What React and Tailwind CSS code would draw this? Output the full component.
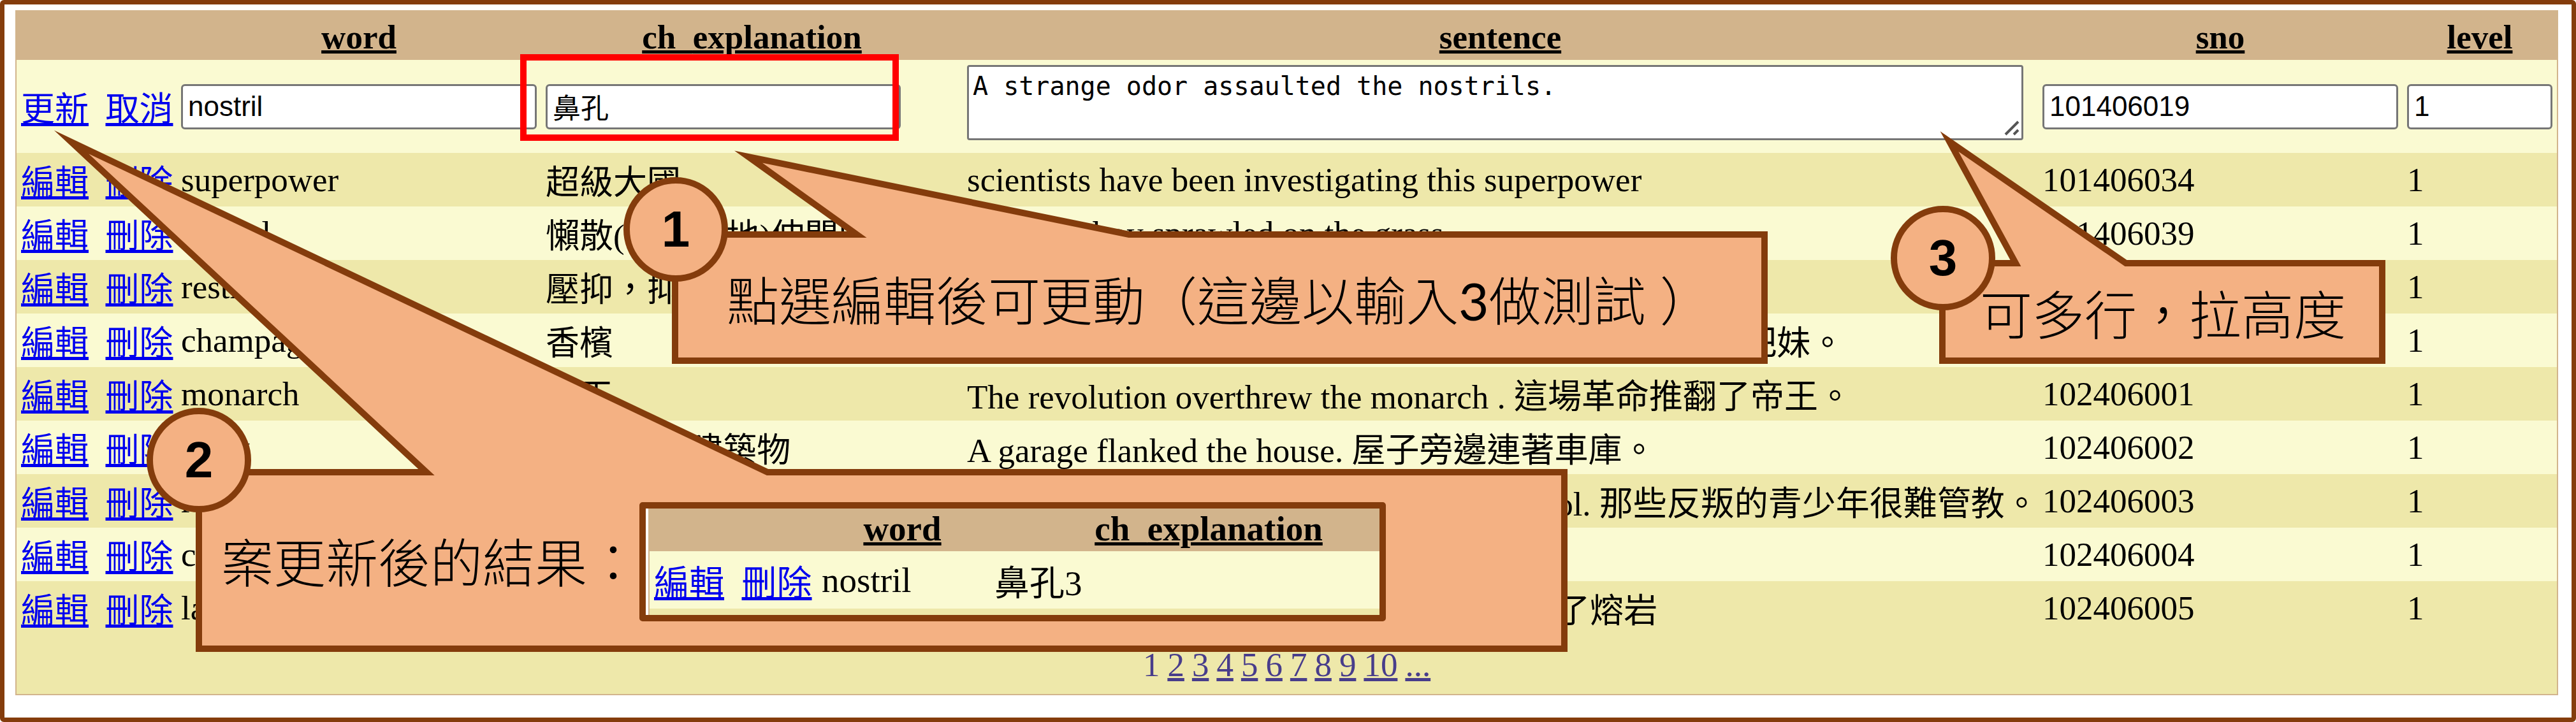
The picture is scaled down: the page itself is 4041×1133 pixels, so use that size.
const ROWS = [
  ["superpower", "超級大國", "scientists have been investigating this superpower", "101406034"],
  ["sprawl", "懶散(或笨拙地)伸開四肢", "The lazy boy sprawled on the grass.", "101406039"],
  ["restrain", "壓抑，抑制", "She could not restrain her anger.", "101406042"],
  ["champagne", "香檳", "He uses champagne to pick up girls . 他總是喜歡用香檳把妹。", "101406050"],
  ["monarch", "帝王", "The revolution overthrew the monarch . 這場革命推翻了帝王。", "102406001"],
  ["flank", "側面,側翼建築物", "A garage flanked the house. 屋子旁邊連著車庫。", "102406002"],
  ["rebellious", "反叛的", "These rebellious teenagers are hard to control. 那些反叛的青少年很難管教。", "102406003"],
  ["crater", "火山口", "The crater is very deep.", "102406004"],
  ["lava", "熔岩", "Lava streamed from the volcano. 火山噴出了熔岩", "102406005"],
];

const PAGES = ["2", "3", "4", "5", "6", "7", "8", "9", "10", "..."];

const LINE = "underline decoration-[5px] underline-offset-[3px]";
const FIELD =
  "block h-[71px] rounded-[6px] border-[3px] border-[#767676] bg-white px-[8px] font-['Liberation_Sans','Noto_Sans_CJK_TC',sans-serif] text-[44px] text-black";

function Commands({ first, second }) {
  return (
    <td className="pl-[7px] whitespace-nowrap">
      <a href="#" className={`text-[#0000ee] ${LINE}`}>{first}</a>
      {"\u00a0\u00a0"}
      <a href="#" className={`text-[#0000ee] ${LINE}`}>{second}</a>
    </td>
  );
}

function Heading({ children, className = "p-0" }) {
  return (
    <th scope="col" className={`text-center font-bold ${className}`}>
      <a href="#" className={`text-black ${LINE}`}>{children}</a>
    </th>
  );
}

function Explanation() {
  return (
    <>
      <span className="[text-decoration-skip-ink:none]">ch_</span>explanation
    </>
  );
}

function WordTable() {
  return (
    <table className="w-full table-fixed border-separate border-spacing-0 border-2 border-[#d2b48c] text-left">
      <colgroup>
        <col className="w-[251px]" />
        <col className="w-[572px]" />
        <col className="w-[661px]" />
        <col />
        <col className="w-[572px]" />
        <col className="w-[242px]" />
      </colgroup>
      <thead>
        <tr className="h-[76px] bg-[#d2b48c]">
          <td />
          <Heading className="px-0 pt-[4px] pb-0">word</Heading>
          <Heading className="px-0 pt-[4px] pb-0"><Explanation /></Heading>
          <Heading className="px-0 pt-[4px] pb-0">sentence</Heading>
          <Heading className="px-0 pt-[4px] pb-0">sno</Heading>
          <Heading className="px-0 pt-[4px] pb-0">level</Heading>
        </tr>
      </thead>
      <tbody>
        <tr className="h-[146px] bg-[#fafad2]">
          <Commands first="更新" second="取消" />
          <td className="px-[7px]">
            <input aria-label="word" defaultValue="nostril" className={`w-full ${FIELD}`} />
          </td>
          <td className="px-[7px]">
            <input aria-label="ch_explanation" defaultValue="鼻孔" className={`w-[557px] ${FIELD}`} />
          </td>
          <td className="px-[7px] pt-[8px] align-top">
            <div className="relative mr-4">
              <textarea
                aria-label="sentence"
                defaultValue="A strange odor assaulted the nostrils."
                className="block h-[118px] w-full resize-none rounded-[4px] border-[3px] border-[#767676] bg-white px-[6px] pt-[6px] font-['DejaVu_Sans_Mono',monospace] text-[40px] leading-[48px] text-black"
              />
              <svg viewBox="0 0 26 26" className="absolute right-[5px] bottom-[6px] size-[26px]" aria-hidden="true">
                <path d="M3 23L23 3M16 23L23 16" stroke="#555" strokeWidth="4" fill="none" />
              </svg>
            </div>
          </td>
          <td className="px-[7px]">
            <input aria-label="sno" defaultValue="101406019" className={`w-full ${FIELD}`} />
          </td>
          <td className="px-[7px]">
            <input aria-label="level" defaultValue="1" className={`w-full ${FIELD}`} />
          </td>
        </tr>
        {ROWS.map(([word, meaning, sentence, sno]) => (
          <tr key={word} className="h-[84px] whitespace-nowrap odd:bg-[#fafad2] even:bg-[#eee8aa]">
            <Commands first="編輯" second="刪除" />
            <td className="px-[7px] py-0">{word}</td>
            <td className="px-[7px] py-0">{meaning}</td>
            <td className="px-[7px] py-0">{sentence}</td>
            <td className="px-[7px] py-0">{sno}</td>
            <td className="px-[7px] py-0">1</td>
          </tr>
        ))}
      </tbody>
      <tfoot>
        <tr className="h-[93px] bg-[#eee8aa]">
          <td colSpan={6} className="p-0">
            <nav aria-label="Pages" className="flex justify-center gap-3 text-[#483d8b]">
              <span>1</span>
              {PAGES.map((p) => (
                <a key={p} href="#" className={LINE}>{p}</a>
              ))}
            </nav>
          </td>
        </tr>
      </tfoot>
    </table>
  );
}

function Outline({ width, height, points }) {
  return (
    <svg
      width={width}
      height={height}
      viewBox={`0 0 ${width} ${height}`}
      className="absolute top-0 left-0 overflow-visible"
      aria-hidden="true"
    >
      <polygon points={points} fill="#f4b183" stroke="#843c0c" strokeWidth="10" strokeMiterlimit="20" />
    </svg>
  );
}

const BADGE =
  "absolute flex size-[164px] items-center justify-center rounded-full border-[10px] border-[#843c0c] bg-[#f4b183] font-['Liberation_Sans',sans-serif] text-[80px] leading-none font-bold";
const NOTE = "font-['Lato','Noto_Sans_CJK_TC',sans-serif] text-[82px] leading-[100px] font-light whitespace-nowrap";

function ResultPreview() {
  return (
    <div className="overflow-hidden rounded-[5px] border-[10px] border-[#843c0c] bg-white pl-[4px]">
      <table className="w-full table-fixed border-separate border-spacing-0 border-l-2 border-[#d2b48c] text-left font-['Liberation_Serif','Noto_Sans_CJK_TC',serif] text-[55px] leading-[normal]">
        <colgroup>
          <col className="w-[263px]" />
          <col className="w-[267px]" />
          <col />
        </colgroup>
        <thead>
          <tr className="h-[67px] bg-[#d2b48c]">
            <td />
            <Heading className="px-0 pt-0 pb-[4px]">word</Heading>
            <Heading className="pt-0 pr-0 pb-[4px] pl-[79px]"><Explanation /></Heading>
          </tr>
        </thead>
        <tbody>
          <tr className="h-[90px] bg-[#fafad2]">
            <Commands first="編輯" second="刪除" />
            <td className="px-[7px] py-0">nostril</td>
            <td className="px-[11px] py-0">鼻孔3</td>
          </tr>
          <tr className="h-[10px] bg-[#eee8aa]">
            <td colSpan={3} className="p-0" />
          </tr>
        </tbody>
      </table>
    </div>
  );
}

export default function App() {
  return (
    <main
      lang="zh-Hant"
      className="relative min-h-screen w-full overflow-hidden rounded-[6px] border-[7px] border-[#843c0c] bg-white pt-[9px] pr-[21px] pb-[35px] pl-[17px] font-['Liberation_Serif','Noto_Sans_CJK_TC',serif] text-[53px] leading-[normal] text-black"
    >
      <WordTable />

      <div className="absolute top-[78px] left-[809px] h-[136px] w-[594px] border-[10px] border-[#ff0000]" />

      <section className="absolute top-[229px] left-[1047px] h-[335px] w-[1719px]">
        <Outline width={1719} height={335} points="5,132 290,132 120,10 717,132 1714,132 1714,330 5,330" />
        <p className={`absolute top-[185px] left-[86px] ${NOTE}`}>
          點選編輯後可更動（這邊以輸入<span className="font-normal">3</span>做測試 ）
        </p>
      </section>
      <div className={`${BADGE} top-[271px] left-[971px]`}>1</div>

      <section className="absolute top-[198px] left-[78px] h-[818px] w-[2374px]">
        <Outline width={2374} height={818} points="227,536 584,536 27,18 1119,536 2369,536 2369,813 227,813" />
        <div className="absolute top-[583px] right-[285px] left-[262px] flex items-center justify-between">
          <p className={NOTE}>案更新後的結果：</p>
          <div className="w-[1171px]">
            <ResultPreview />
          </div>
        </div>
      </section>
      <div className={`${BADGE} top-[633px] left-[223px]`}>2</div>

      <section className="absolute top-[199px] left-[3035px] h-[365px] w-[700px]">
        <Outline width={700} height={365} points="5,207 120,207 16,16 293,207 695,207 695,360 5,360" />
        <p className={`absolute top-[237px] left-[64px] ${NOTE}`}>可多行，拉高度</p>
      </section>
      <div className={`${BADGE} top-[316px] left-[2959px]`}>3</div>
    </main>
  );
}
